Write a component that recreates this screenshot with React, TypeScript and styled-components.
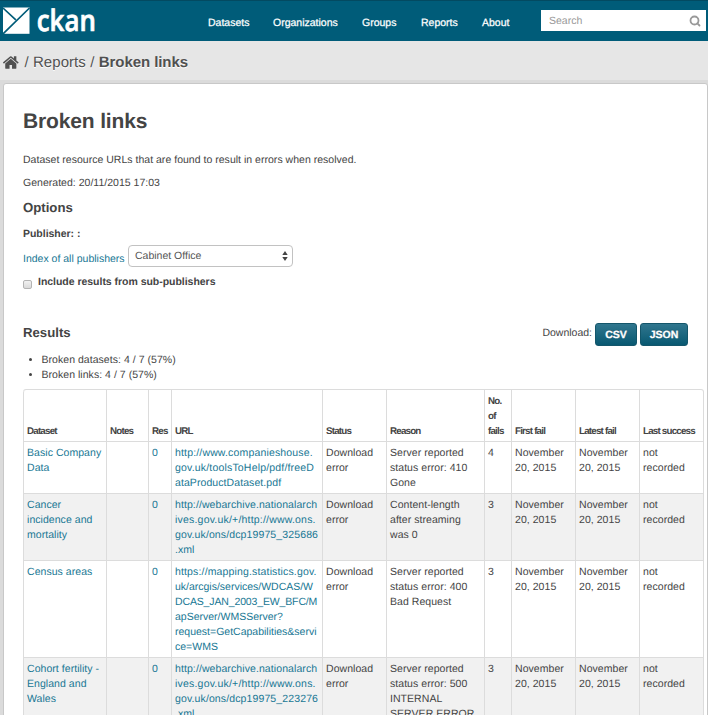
import React from "react";
import styled, { createGlobalStyle, css } from "styled-components";
import { Search } from "lucide-react";

const GlobalStyle = createGlobalStyle`
  * { box-sizing: border-box; }
  html, body { margin: 0; padding: 0; }
  body {
    height: 715px;
    overflow: hidden;
    background: #e6e6e6;
    color: #444;
    font: 10.5px/15px "Liberation Sans", Arial, sans-serif;
    text-rendering: geometricPrecision;
  }
`;

const Page = styled.div`
  width: 708px;
  height: 715px;
  overflow: hidden;
  display: flex;
  flex-direction: column;
`;

const Masthead = styled.header`
  flex: none;
  height: 41px;
  display: flex;
  align-items: flex-start;
  background: #005c79;
  border-top: 1px solid #034a61;
`;

const Logo = styled.svg`
  display: block;
  width: 100px;
  height: 40px;
  overflow: visible;
`;

const Nav = styled.nav`
  display: flex;
  gap: 24px;
  padding: 15px 0 0 108px;
  width: 441px;
  white-space: nowrap;
`;

const NavLink = styled.a<{ $width: number }>`
  width: ${(p) => p.$width}px;
  color: #fff;
  -webkit-text-stroke: 0.25px #fff;
`;

const SearchBox = styled.div`
  display: flex;
  justify-content: space-between;
  align-items: center;
  width: 165px;
  height: 21px;
  margin-top: 9px;
  padding: 1px 5px 0 8px;
  background: #fff;
  color: #999;
`;

const Toolbar = styled.div`
  flex: none;
  height: 39px;
  display: flex;
  align-items: center;
  gap: 4.4px;
  padding: 5px 0 0 3.4px;
  font-size: 15px;
  line-height: 20px;
  color: #505050;
  text-shadow: 0 1px 0 #fff;
  white-space: nowrap;
`;

const HomeIcon = styled.svg`
  width: 15.6px;
  height: 13px;
  margin: -1px 1px 0 0;
  fill: #505050;
`;

const Crumb = styled.span<{ $active?: boolean }>`
  font-weight: ${(p) => (p.$active ? 700 : 400)};
  letter-spacing: ${(p) => (p.$active ? -0.08 : 0.05)}px;
`;

const Main = styled.main`
  flex: 1;
  padding: 3px 0 0 3px;
  background: #dbdbdb;
`;

const Card = styled.section`
  width: 705px;
  height: 640px;
  padding: 23px 3px 0 19px;
  background: #fff;
  border: 1px solid #c8c8c8;
  border-radius: 3px 3px 0 0;
`;

const Title = styled.h1`
  margin: 0 0 16px;
  font-size: 21px;
  line-height: 30px;
  letter-spacing: -0.15px;
`;

const Text = styled.p`
  margin: 0 0 8px;
  letter-spacing: 0.02px;
`;

const Heading = styled.h3`
  margin: 0;
  font-size: 13.2px;
  line-height: 20px;
`;

const Label = styled.label`
  display: block;
  font-weight: 700;
  letter-spacing: -0.03px;
`;

const Options = styled.form`
  display: flex;
  flex-direction: column;
  margin-top: -1px;
`;

const OptionsHeading = styled(Heading)`
  margin-bottom: 9px;
`;

const PublisherRow = styled.div`
  display: flex;
  gap: 3px;
  height: 22px;
  margin: 3px 0 8px;
`;

const Link = styled.a`
  color: #187794;
`;

const PublisherLink = styled(Link)`
  width: 102px;
  padding-top: 7px;
  white-space: nowrap;
`;

const Select = styled.div`
  display: flex;
  justify-content: space-between;
  align-items: center;
  width: 165px;
  height: 22px;
  padding: 0 4px 0 6px;
  border: 1px solid #c2c2c2;
  border-radius: 4px;
  color: #555;
`;

const CheckRow = styled.div`
  display: flex;
  gap: 6px;
`;

const Checkbox = styled.span`
  width: 9px;
  height: 9px;
  margin-top: 5px;
  border: 1px solid #b4b4b4;
  border-radius: 2px;
  background: linear-gradient(#f2f2f2, #dadada);
`;

const ResultsHead = styled.div`
  display: flex;
  justify-content: space-between;
  height: 30px;
  margin-top: 33px;
  padding-right: 16px;
`;

const Downloads = styled.div`
  display: flex;
  gap: 3px;
`;

const DownloadLabel = styled.span`
  padding-top: 3px;
`;

const Button = styled.a<{ $width: number }>`
  width: ${(p) => p.$width}px;
  height: 23px;
  border: 1px solid #14566b;
  border-radius: 3px;
  background: linear-gradient(#30768e, #085871);
  color: #fff;
  font-weight: 700;
  line-height: 22px;
  text-align: center;
  text-shadow: 0 -1px 0 rgba(0, 0, 0, 0.25);
  -webkit-text-stroke: 0.3px #fff;
`;

const Stats = styled.ul`
  margin: 0 0 6px;
  padding: 0 0 0 18.5px;
  letter-spacing: 0.04px;
`;

const Table = styled.table`
  width: 681px;
  table-layout: fixed;
  border: 1px solid #dcdcdc;
  border-left: 0;
  border-collapse: separate;
  border-spacing: 0;
  border-radius: 3px;
`;

const Col = styled.col<{ $width: number }>`
  width: ${(p) => p.$width}px;
`;

const cell = css`
  padding: 4px 0 2px 3px;
  border-left: 1px solid #dcdcdc;
  text-align: left;
  white-space: nowrap;
`;

const HeadCell = styled.th`
  ${cell}
  vertical-align: bottom;
  font-size: 9.75px;
  &:first-child { border-top-left-radius: 3px; }
`;

const Cell = styled.td`
  ${cell}
  vertical-align: top;
  border-top: 1px solid #dcdcdc;
`;

const Row = styled.tr<{ $shaded: boolean }>`
  background: ${(p) => (p.$shaded ? "#f1f1f1" : "#fff")};
`;

const Line = styled.span<{ $tracking: number }>`
  display: block;
  letter-spacing: ${(p) => p.$tracking}px;
`;

const NAV: [string, number][] = [
  ["Datasets", 41],
  ["Organizations", 65],
  ["Groups", 35],
  ["Reports", 37],
  ["About", 30],
];

const COLUMNS: { lines: string[]; width: number }[] = [
  { lines: ["Dataset"], width: 83 },
  { lines: ["Notes"], width: 42 },
  { lines: ["Res"], width: 23 },
  { lines: ["URL"], width: 151 },
  { lines: ["Status"], width: 64 },
  { lines: ["Reason"], width: 98 },
  { lines: ["No.", "of", "fails"], width: 27 },
  { lines: ["First fail"], width: 64 },
  { lines: ["Latest fail"], width: 64 },
  { lines: ["Last success"], width: 64 },
];

const ROWS: { dataset: string[]; url: [string, number][]; reason: string[]; fails: string }[] = [
  {
    dataset: ["Basic Company", "Data"],
    url: [
      ["http://www.companieshouse.", 0.16],
      ["gov.uk/toolsToHelp/pdf/freeD", 0.18],
      ["ataProductDataset.pdf", 0.08],
    ],
    reason: ["Server reported", "status error: 410", "Gone"],
    fails: "4",
  },
  {
    dataset: ["Cancer", "incidence and", "mortality"],
    url: [
      ["http://webarchive.nationalarch", 0.09],
      ["ives.gov.uk/+/http://www.ons.", 0.2],
      ["gov.uk/ons/dcp19975_325686", 0.12],
      [".xml", 0],
    ],
    reason: ["Content-length", "after streaming", "was 0"],
    fails: "3",
  },
  {
    dataset: ["Census areas"],
    url: [
      ["https://mapping.statistics.gov.", 0.15],
      ["uk/arcgis/services/WDCAS/W", -0.01],
      ["DCAS_JAN_2003_EW_BFC/M", -0.14],
      ["apServer/WMSServer?", 0],
      ["request=GetCapabilities&servi", 0],
      ["ce=WMS", 0],
    ],
    reason: ["Server reported", "status error: 400", "Bad Request"],
    fails: "3",
  },
  {
    dataset: ["Cohort fertility -", "England and", "Wales"],
    url: [
      ["http://webarchive.nationalarch", 0.09],
      ["ives.gov.uk/+/http://www.ons.", 0.2],
      ["gov.uk/ons/dcp19975_223276", 0.12],
      [".xml", 0],
    ],
    reason: ["Server reported", "status error: 500", "INTERNAL", "SERVER ERROR"],
    fails: "3",
  },
];

const Lines = ({ of, tracking = 0.05 }: { of: string[]; tracking?: number }) => (
  <>
    {of.map((text) => (
      <Line key={text} $tracking={tracking}>
        {text}
      </Line>
    ))}
  </>
);

const CkanLogo = () => (
  <Logo viewBox="0 1 100 40" aria-label="ckan">
    <rect x="3" y="7.5" width="26.5" height="26.3" fill="#fff" />
    <path d="M3 8 L15.8 19.8 M29.5 8 L3 33.8" stroke="#005c79" strokeWidth="1.7" fill="none" />
    <text
      x="36.8"
      y="31"
      fill="#fff"
      stroke="#fff"
      strokeWidth="0.7"
      fontFamily="'Open Sans', 'Noto Sans', sans-serif"
      fontSize="29.5"
      fontWeight="600"
      textLength="59"
      lengthAdjust="spacingAndGlyphs"
    >
      ckan
    </text>
  </Logo>
);

export default function App() {
  return (
    <>
      <GlobalStyle />
      <Page>
        <Masthead>
          <CkanLogo />
          <Nav>
            {NAV.map(([name, width]) => (
              <NavLink key={name} $width={width}>
                {name}
              </NavLink>
            ))}
          </Nav>
          <SearchBox>
            <span>Search</span>
            <Search size={12} strokeWidth={3.6} />
          </SearchBox>
        </Masthead>
        <Toolbar>
          <HomeIcon viewBox="89 236 1614 1320" preserveAspectRatio="none">
            <path d="M1472 992v480q0 26-19 45t-45 19h-384v-384h-256v384h-384q-26 0-45-19t-19-45v-480q0-1 .5-3t.5-3l575-474 575 474q1 2 1 6zm223-69l-62 74q-8 9-21 11h-3q-13 0-21-7l-692-577-692 577q-12 8-24 7-13-2-21-11l-62-74q-8-10-7-23.5t11-21.5l719-599q32-26 76-26t76 26l244 204v-195q0-14 9-23t23-9h192q14 0 23 9t9 23v408l219 182q10 8 11 21.5t-7 23.5z" />
          </HomeIcon>
          <Crumb>/</Crumb>
          <Crumb>Reports</Crumb>
          <Crumb>/</Crumb>
          <Crumb $active>Broken links</Crumb>
        </Toolbar>
        <Main>
          <Card>
            <Title>Broken links</Title>
            <Text>Dataset resource URLs that are found to result in errors when resolved.</Text>
            <Text>Generated: 20/11/2015 17:03</Text>
            <Options>
              <OptionsHeading>Options</OptionsHeading>
              <Label>Publisher: :</Label>
              <PublisherRow>
                <PublisherLink>Index of all publishers</PublisherLink>
                <Select>
                  <span>Cabinet Office</span>
                  <svg width="6" height="10" viewBox="0 0 6 10" fill="#444">
                    <path d="M3 0 L5.7 4 H0.3 Z M3 10 L0.3 6 H5.7 Z" />
                  </svg>
                </Select>
              </PublisherRow>
              <CheckRow>
                <Checkbox />
                <Label>Include results from sub-publishers</Label>
              </CheckRow>
            </Options>
            <ResultsHead>
              <Heading>Results</Heading>
              <Downloads>
                <DownloadLabel>Download:</DownloadLabel>
                <Button $width={42}>CSV</Button>
                <Button $width={48}>JSON</Button>
              </Downloads>
            </ResultsHead>
            <Stats>
              <li>Broken datasets: 4 / 7 (57%)</li>
              <li>Broken links: 4 / 7 (57%)</li>
            </Stats>
            <Table>
              <colgroup>
                {COLUMNS.map((c) => (
                  <Col key={c.lines[0]} $width={c.width} />
                ))}
              </colgroup>
              <thead>
                <tr>
                  {COLUMNS.map((c) => (
                    <HeadCell key={c.lines[0]}>
                      <Lines of={c.lines} tracking={-0.78} />
                    </HeadCell>
                  ))}
                </tr>
              </thead>
              <tbody>
                {ROWS.map((r, i) => (
                  <Row key={r.dataset[0]} $shaded={i % 2 === 1}>
                    <Cell><Link><Lines of={r.dataset} /></Link></Cell>
                    <Cell />
                    <Cell><Link>0</Link></Cell>
                    <Cell>
                      <Link>
                        {r.url.map(([text, tracking]) => (
                          <Line key={text} $tracking={tracking}>{text}</Line>
                        ))}
                      </Link>
                    </Cell>
                    <Cell><Lines of={["Download", "error"]} /></Cell>
                    <Cell><Lines of={r.reason} /></Cell>
                    <Cell>{r.fails}</Cell>
                    <Cell><Lines of={["November", "20, 2015"]} /></Cell>
                    <Cell><Lines of={["November", "20, 2015"]} /></Cell>
                    <Cell><Lines of={["not", "recorded"]} /></Cell>
                  </Row>
                ))}
              </tbody>
            </Table>
          </Card>
        </Main>
      </Page>
    </>
  );
}
